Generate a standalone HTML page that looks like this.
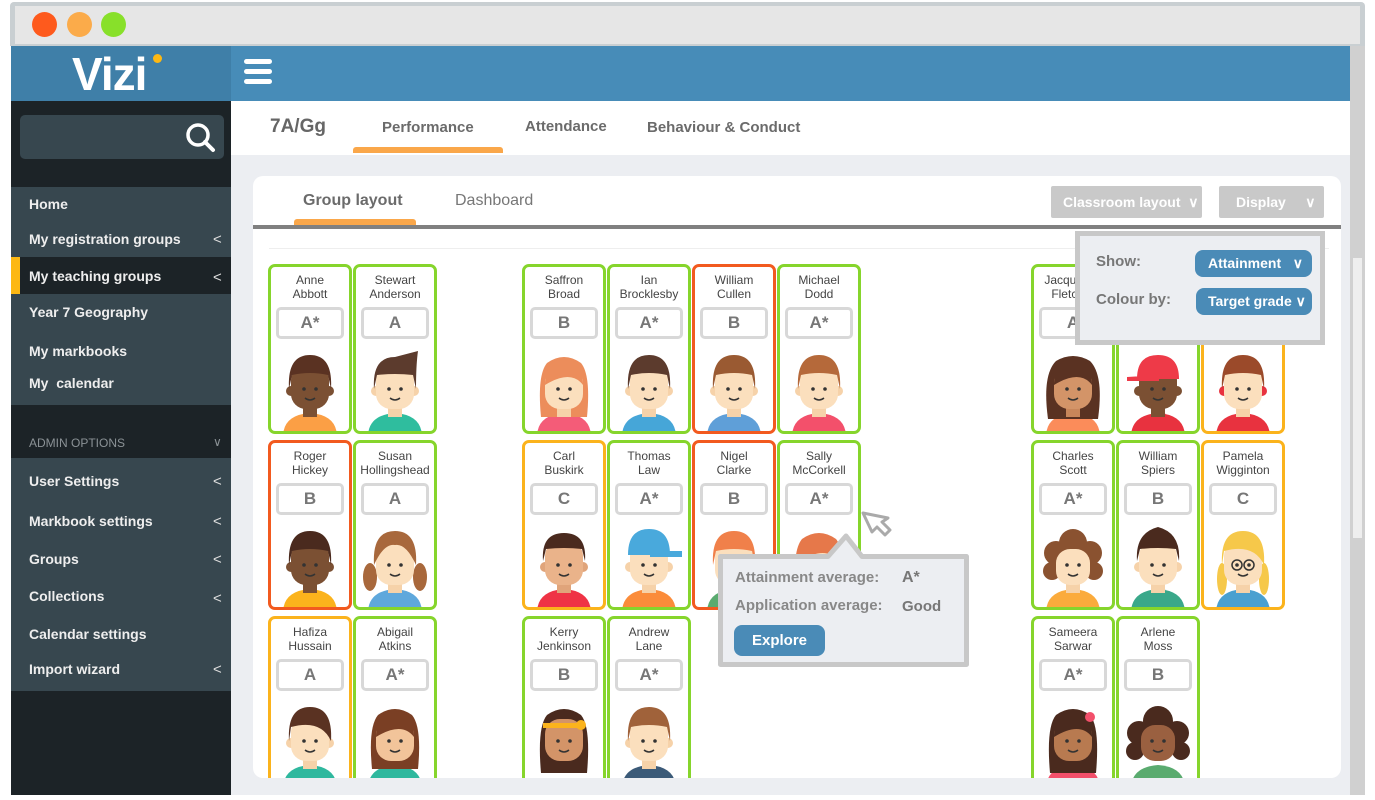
<!DOCTYPE html>
<html><head><meta charset="utf-8"><style>
*{margin:0;padding:0;box-sizing:border-box}
body{width:1375px;height:800px;overflow:hidden;background:#fff;font-family:"Liberation Sans",sans-serif;position:relative}
.a{position:absolute}
.frame{left:10px;top:2px;width:1355px;height:44px;background:#c9cfd2;border-radius:4px 4px 0 0}
.frame .in{left:5px;top:4px;width:1345px;height:38px;background:#e6e6e6}
.dot{width:25px;height:25px;border-radius:50%;top:10px}
.side{left:11px;top:101px;width:220px;height:694px;background:#1c2327;color:#eee;font-weight:bold;font-size:14px}
.mi{position:absolute;left:18px}
.chev{position:absolute;left:202px;font-size:15px;color:#ddd;font-weight:normal}
.card{position:absolute;width:84px;height:170px;border:3px solid #86d52c;border-radius:7px;background:#fff;overflow:hidden}
.card .n{position:absolute;top:6px;left:0;width:78px;text-align:center;font-size:12px;line-height:14px;color:#444}
.card .g{position:absolute;top:40px;left:5px;width:68px;height:32px;border:3px solid #d8d8d8;border-radius:5px;text-align:center;font-weight:bold;font-size:17px;line-height:26px;color:#777}
.card svg{position:absolute;top:78px;left:0}
.R{border-color:#f25a1f}.Y{border-color:#fbb31c}
.btn{background:#4a8bb7;color:#fff;font-weight:bold;border-radius:8px}
</style></head><body>
<div class="a frame"><div class="a in"></div>
<div class="a dot" style="left:22px;background:#fe5a1d"></div>
<div class="a dot" style="left:57px;background:#fbab4a"></div>
<div class="a dot" style="left:91px;background:#88e02a"></div></div>
<!-- header -->
<div class="a" style="left:11px;top:46px;width:220px;height:55px;background:#3f7fa8"></div>
<div class="a" style="left:231px;top:46px;width:1119px;height:55px;background:#478cb8"></div>
<div class="a" style="left:72px;top:46px;color:#fff;font-weight:bold;font-size:46px;line-height:56px;letter-spacing:-1px">Vizi</div>
<div class="a" style="left:153px;top:54px;width:9px;height:9px;border-radius:50%;background:#fdb813"></div>
<div class="a" style="left:244px;top:59px;width:28px;height:5px;background:#fff;border-radius:3px"></div>
<div class="a" style="left:244px;top:69px;width:28px;height:5px;background:#fff;border-radius:3px"></div>
<div class="a" style="left:244px;top:79px;width:28px;height:5px;background:#fff;border-radius:3px"></div>
<!-- sidebar -->
<div class="a side">
<div class="a" style="left:9px;top:14px;width:204px;height:44px;background:#37474f;border-radius:5px"></div>
<svg class="a" style="left:172px;top:19px" width="34" height="34" viewBox="0 0 34 34"><circle cx="15" cy="15" r="10" fill="none" stroke="#fff" stroke-width="3.5"/><path d="M22 22 L30 30" stroke="#fff" stroke-width="4" stroke-linecap="round"/></svg>
<div class="a" style="left:0;top:86px;width:220px;height:218px;background:#37474f"></div>
<div class="a" style="left:0;top:156px;width:220px;height:37px;background:#1c2327"></div>
<div class="a" style="left:0;top:156px;width:9px;height:37px;background:#fdb813"></div>
<div class="mi" style="top:95px">Home</div>
<div class="mi" style="top:130px">My registration groups</div><div class="chev" style="top:130px">&lt;</div>
<div class="mi" style="top:167px">My teaching groups</div><div class="chev" style="top:168px">&lt;</div>
<div class="mi" style="top:203px">Year 7 Geography</div>
<div class="mi" style="top:242px">My markbooks</div>
<div class="mi" style="top:274px">My &nbsp;calendar</div>
<div class="mi" style="top:335px;font-weight:normal;font-size:12px;color:#8b9296">ADMIN OPTIONS</div><div class="chev" style="top:334px;color:#8b9296;font-size:12px">&#8744;</div>
<div class="a" style="left:0;top:357px;width:220px;height:233px;background:#37474f"></div>
<div class="mi" style="top:372px">User Settings</div><div class="chev" style="top:372px">&lt;</div>
<div class="mi" style="top:412px">Markbook settings</div><div class="chev" style="top:412px">&lt;</div>
<div class="mi" style="top:450px">Groups</div><div class="chev" style="top:450px">&lt;</div>
<div class="mi" style="top:487px">Collections</div><div class="chev" style="top:489px">&lt;</div>
<div class="mi" style="top:525px">Calendar settings</div>
<div class="mi" style="top:560px">Import wizard</div><div class="chev" style="top:560px">&lt;</div>
</div>
<!-- main -->
<div class="a" style="left:231px;top:101px;width:1119px;height:694px;background:#eceef2"></div>
<div class="a" style="left:231px;top:101px;width:1119px;height:54px;background:#fff"></div>
<div class="a" style="left:270px;top:116px;font-size:19px;font-weight:bold;color:#666">7A/Gg</div>
<div class="a" style="left:382px;top:119px;font-size:15px;font-weight:bold;color:#6b6b6b">Performance</div>
<div class="a" style="left:353px;top:147px;width:150px;height:6px;background:#faa74a;border-radius:3px 3px 0 0"></div>
<div class="a" style="left:525px;top:118px;font-size:15px;font-weight:bold;color:#6b6b6b">Attendance</div>
<div class="a" style="left:647px;top:119px;font-size:15px;font-weight:bold;color:#6b6b6b">Behaviour &amp; Conduct</div>
<div class="a" style="left:1350px;top:46px;width:15px;height:749px;background:#d0d0d0"></div>
<div class="a" style="left:1353px;top:258px;width:9px;height:280px;background:#eee"></div>
<div class="a" style="left:253px;top:176px;width:1088px;height:602px;background:#fff;border-radius:10px;overflow:hidden">
<div class="a" style="left:50px;top:16px;font-size:16px;font-weight:bold;color:#6b6b6b">Group layout</div>
<div class="a" style="left:202px;top:16px;font-size:16px;color:#777">Dashboard</div>
<div class="a" style="left:41px;top:43px;width:122px;height:6px;background:#faa74a;border-radius:3px 3px 0 0"></div>
<div class="a" style="left:0;top:49px;width:1088px;height:4px;background:#808080"></div>
<div class="a" style="left:16px;top:72px;width:1060px;height:1px;background:#eee"></div>
<div class="a" style="left:798px;top:10px;width:151px;height:32px;background:#c9c9c9;border-radius:2px;color:#fff;font-weight:bold;font-size:14px;line-height:32px;padding-left:12px">Classroom layout &nbsp;&#8744;</div>
<div class="a" style="left:966px;top:10px;width:105px;height:32px;background:#c9c9c9;border-radius:2px;color:#fff;font-weight:bold;font-size:14px;line-height:32px;padding-left:17px">Display &nbsp;&nbsp;&nbsp;&nbsp;&#8744;</div>
</div>

<svg width="0" height="0" style="position:absolute"><defs>
<symbol id="sm" viewBox="0 0 78 90"><circle cx="33" cy="44" r="1.8" fill="#333"/><circle cx="45" cy="44" r="1.8" fill="#333"/><path d="M34 53 Q39 57 44 53" stroke="#333" stroke-width="1.5" fill="none"/></symbol>
</defs></svg>

<!-- cards -->
<div id="cards">
<!-- template: head skin, hair, shirt -->
<div class="card" style="left:268px;top:264px"><div class="n">Anne<br>Abbott</div><div class="g">A*</div>
<svg width="78" height="90" viewBox="0 0 78 90"><path d="M12 92 Q12 70 39 68 Q66 70 66 92Z" fill="#fb9f45"/><rect x="32" y="58" width="14" height="14" fill="#7b5033"/><circle cx="20" cy="46" r="5" fill="#7b5033"/><circle cx="58" cy="46" r="5" fill="#7b5033"/><rect x="20" y="20" width="38" height="44" rx="15" fill="#7b5033"/><path d="M18 44 Q16 10 39 10 Q62 10 60 44 L57 30 Q39 26 21 30Z" fill="#5a3222"/><use href="#sm" width="78" height="90"/></svg></div>
<div class="card" style="left:353px;top:264px"><div class="n">Stewart<br>Anderson</div><div class="g">A</div>
<svg width="78" height="90" viewBox="0 0 78 90"><path d="M12 92 Q12 70 39 68 Q66 70 66 92Z" fill="#2fbd9e"/><rect x="32" y="58" width="14" height="14" fill="#f6d2a9"/><circle cx="20" cy="46" r="5" fill="#f6d2a9"/><circle cx="58" cy="46" r="5" fill="#f6d2a9"/><rect x="20" y="20" width="38" height="44" rx="15" fill="#fbdfbd"/><path d="M18 44 Q16 12 39 12 L62 6 Q60 20 60 44 L57 30 Q39 28 21 30Z" fill="#5c3b2d"/><use href="#sm" width="78" height="90"/></svg></div>

<div class="card" style="left:522px;top:264px"><div class="n">Saffron<br>Broad</div><div class="g">B</div>
<svg width="78" height="90" viewBox="0 0 78 90"><path d="M12 92 Q12 70 39 68 Q66 70 66 92Z" fill="#f45c78"/><path d="M16 72 Q12 30 22 18 Q39 6 56 18 Q66 30 62 72Z" fill="#ec8d5b"/><rect x="32" y="58" width="14" height="14" fill="#f6d2a9"/><rect x="20" y="22" width="38" height="42" rx="15" fill="#fbdfbd"/><path d="M20 40 Q20 14 39 14 Q58 14 58 40 Q46 24 20 40Z" fill="#ec8d5b"/><use href="#sm" width="78" height="90"/></svg></div>
<div class="card" style="left:607px;top:264px"><div class="n">Ian<br>Brocklesby</div><div class="g">A*</div>
<svg width="78" height="90" viewBox="0 0 78 90"><path d="M12 92 Q12 70 39 68 Q66 70 66 92Z" fill="#46a6d8"/><rect x="32" y="58" width="14" height="14" fill="#f6d2a9"/><circle cx="20" cy="46" r="5" fill="#f6d2a9"/><circle cx="58" cy="46" r="5" fill="#f6d2a9"/><rect x="20" y="20" width="38" height="44" rx="15" fill="#fbdfbd"/><path d="M18 44 Q16 10 39 10 Q62 10 60 44 L57 30 Q39 26 21 30Z" fill="#5c3b2d"/><use href="#sm" width="78" height="90"/></svg></div>
<div class="card R" style="left:692px;top:264px"><div class="n">William<br>Cullen</div><div class="g">B</div>
<svg width="78" height="90" viewBox="0 0 78 90"><path d="M12 92 Q12 70 39 68 Q66 70 66 92Z" fill="#5f9fd8"/><rect x="32" y="58" width="14" height="14" fill="#f6d2a9"/><circle cx="20" cy="46" r="5" fill="#f6d2a9"/><circle cx="58" cy="46" r="5" fill="#f6d2a9"/><rect x="20" y="20" width="38" height="44" rx="15" fill="#fbdfbd"/><path d="M18 44 Q16 10 39 10 Q62 10 60 44 L57 30 Q39 26 21 30Z" fill="#9a5a32"/><use href="#sm" width="78" height="90"/></svg></div>
<div class="card" style="left:777px;top:264px"><div class="n">Michael<br>Dodd</div><div class="g">A*</div>
<svg width="78" height="90" viewBox="0 0 78 90"><path d="M12 92 Q12 70 39 68 Q66 70 66 92Z" fill="#f3506b"/><rect x="32" y="58" width="14" height="14" fill="#f6d2a9"/><circle cx="20" cy="46" r="5" fill="#f6d2a9"/><circle cx="58" cy="46" r="5" fill="#f6d2a9"/><rect x="20" y="20" width="38" height="44" rx="15" fill="#fbdfbd"/><path d="M18 44 Q16 10 39 10 Q62 10 60 44 L57 30 Q39 26 21 30Z" fill="#b5693a"/><use href="#sm" width="78" height="90"/></svg></div>

<div class="card" style="left:1031px;top:264px"><div class="n">Jacqueline<br>Fletcher</div><div class="g">A</div>
<svg width="78" height="90" viewBox="0 0 78 90"><path d="M12 92 Q12 70 39 68 Q66 70 66 92Z" fill="#fb8c5a"/><path d="M14 74 Q8 30 22 16 Q39 6 56 16 Q70 30 64 74Z" fill="#5a3222"/><rect x="32" y="58" width="14" height="14" fill="#c8865a"/><rect x="20" y="22" width="38" height="42" rx="15" fill="#d39468"/><path d="M20 40 Q20 14 39 14 Q58 14 58 40 Q46 24 20 40Z" fill="#5a3222"/><use href="#sm" width="78" height="90"/></svg></div>
<div class="card" style="left:1116px;top:264px"><div class="n">&nbsp;<br>&nbsp;</div><div class="g">B</div>
<svg width="78" height="90" viewBox="0 0 78 90"><path d="M12 92 Q12 70 39 68 Q66 70 66 92Z" fill="#e8323f"/><rect x="32" y="58" width="14" height="14" fill="#7b5033"/><circle cx="20" cy="46" r="5" fill="#7b5033"/><circle cx="58" cy="46" r="5" fill="#7b5033"/><rect x="20" y="20" width="38" height="44" rx="15" fill="#7b5033"/><path d="M18 34 Q18 10 39 10 Q60 10 60 34Z M8 32 L40 30 L40 36 L8 36Z" fill="#ee3a48"/><use href="#sm" width="78" height="90"/></svg></div>
<div class="card Y" style="left:1201px;top:264px"><div class="n">&nbsp;<br>&nbsp;</div><div class="g">B</div>
<svg width="78" height="90" viewBox="0 0 78 90"><path d="M12 92 Q12 70 39 68 Q66 70 66 92Z" fill="#e8323f"/><rect x="32" y="58" width="14" height="14" fill="#f6d2a9"/><circle cx="20" cy="46" r="5" fill="#e8323f"/><circle cx="58" cy="46" r="5" fill="#e8323f"/><rect x="20" y="20" width="38" height="44" rx="15" fill="#fbdfbd"/><path d="M18 44 Q16 10 39 10 Q62 10 60 44 L57 30 Q39 26 21 30Z" fill="#9b4a2a"/><use href="#sm" width="78" height="90"/></svg></div>

<!-- row 2 -->
<div class="card R" style="left:268px;top:440px"><div class="n">Roger<br>Hickey</div><div class="g">B</div>
<svg width="78" height="90" viewBox="0 0 78 90"><path d="M12 92 Q12 70 39 68 Q66 70 66 92Z" fill="#fbb31c"/><rect x="32" y="58" width="14" height="14" fill="#7b5033"/><circle cx="20" cy="46" r="5" fill="#7b5033"/><circle cx="58" cy="46" r="5" fill="#7b5033"/><rect x="20" y="20" width="38" height="44" rx="15" fill="#7b5033"/><path d="M18 44 Q16 10 39 10 Q62 10 60 44 L57 30 Q39 26 21 30Z" fill="#4a2a1e"/><use href="#sm" width="78" height="90"/></svg></div>
<div class="card" style="left:353px;top:440px"><div class="n">Susan<br>Hollingshead</div><div class="g">A</div>
<svg width="78" height="90" viewBox="0 0 78 90"><path d="M12 92 Q12 70 39 68 Q66 70 66 92Z" fill="#5fa8dc"/><ellipse cx="14" cy="56" rx="7" ry="14" fill="#a8683c"/><ellipse cx="64" cy="56" rx="7" ry="14" fill="#a8683c"/><rect x="32" y="58" width="14" height="14" fill="#f6d2a9"/><rect x="20" y="20" width="38" height="44" rx="15" fill="#fbdfbd"/><path d="M18 44 Q16 10 39 10 Q62 10 60 44 Q50 22 39 24 Q28 22 18 44Z" fill="#a8683c"/><use href="#sm" width="78" height="90"/></svg></div>
<div class="card Y" style="left:522px;top:440px"><div class="n">Carl<br>Buskirk</div><div class="g">C</div>
<svg width="78" height="90" viewBox="0 0 78 90"><path d="M12 92 Q12 70 39 68 Q66 70 66 92Z" fill="#ef3345"/><rect x="32" y="58" width="14" height="14" fill="#e0a47a"/><circle cx="20" cy="46" r="5" fill="#e0a47a"/><circle cx="58" cy="46" r="5" fill="#e0a47a"/><rect x="20" y="20" width="38" height="44" rx="15" fill="#eab38a"/><path d="M18 40 Q16 12 39 12 Q62 12 60 40 L57 28 Q39 26 21 28Z" fill="#4a2a1e"/><use href="#sm" width="78" height="90"/></svg></div>
<div class="card" style="left:607px;top:440px"><div class="n">Thomas<br>Law</div><div class="g">A*</div>
<svg width="78" height="90" viewBox="0 0 78 90"><path d="M12 92 Q12 70 39 68 Q66 70 66 92Z" fill="#fb8c3a"/><rect x="32" y="58" width="14" height="14" fill="#f6d2a9"/><circle cx="20" cy="46" r="5" fill="#f6d2a9"/><circle cx="58" cy="46" r="5" fill="#f6d2a9"/><rect x="20" y="20" width="38" height="44" rx="15" fill="#fbdfbd"/><path d="M18 34 Q18 8 39 8 Q60 8 60 34Z M40 30 L72 30 L72 36 L40 36Z" fill="#49a9dc"/><use href="#sm" width="78" height="90"/></svg></div>
<div class="card R" style="left:692px;top:440px"><div class="n">Nigel<br>Clarke</div><div class="g">B</div>
<svg width="78" height="90" viewBox="0 0 78 90"><path d="M12 92 Q12 70 39 68 Q66 70 66 92Z" fill="#5aab6f"/><rect x="32" y="58" width="14" height="14" fill="#f6d2a9"/><rect x="20" y="20" width="38" height="44" rx="15" fill="#fbdfbd"/><path d="M18 44 Q16 10 39 10 Q62 10 60 44 L57 30 Q39 26 21 30Z" fill="#f0804a"/><use href="#sm" width="78" height="90"/></svg></div>
<div class="card" style="left:777px;top:440px"><div class="n">Sally<br>McCorkell</div><div class="g">A*</div>
<svg width="78" height="90" viewBox="0 0 78 90"><path d="M12 92 Q12 70 39 68 Q66 70 66 92Z" fill="#f45c78"/><path d="M16 72 Q12 30 22 18 Q39 6 56 18 Q66 30 62 72Z" fill="#e6784a"/><rect x="20" y="22" width="38" height="42" rx="15" fill="#fbdfbd"/><path d="M20 40 Q20 14 39 14 Q58 14 58 40 Q46 24 20 40Z" fill="#e6784a"/></svg></div>
<div class="card" style="left:1031px;top:440px"><div class="n">Charles<br>Scott</div><div class="g">A*</div>
<svg width="78" height="90" viewBox="0 0 78 90"><path d="M12 92 Q12 70 39 68 Q66 70 66 92Z" fill="#fbab3c"/><circle cx="22" cy="32" r="12" fill="#8a5230"/><circle cx="56" cy="32" r="12" fill="#8a5230"/><circle cx="39" cy="22" r="14" fill="#8a5230"/><circle cx="18" cy="50" r="9" fill="#8a5230"/><circle cx="60" cy="50" r="9" fill="#8a5230"/><rect x="32" y="58" width="14" height="14" fill="#f6d2a9"/><rect x="22" y="28" width="34" height="36" rx="14" fill="#fbdfbd"/><use href="#sm" width="78" height="90"/></svg></div>
<div class="card" style="left:1116px;top:440px"><div class="n">William<br>Spiers</div><div class="g">B</div>
<svg width="78" height="90" viewBox="0 0 78 90"><path d="M12 92 Q12 70 39 68 Q66 70 66 92Z" fill="#3aa88a"/><rect x="32" y="58" width="14" height="14" fill="#f6d2a9"/><circle cx="20" cy="46" r="5" fill="#f6d2a9"/><circle cx="58" cy="46" r="5" fill="#f6d2a9"/><rect x="20" y="20" width="38" height="44" rx="15" fill="#fbdfbd"/><path d="M18 40 Q16 12 39 6 Q62 12 60 40 L57 28 Q39 26 21 28Z" fill="#4a2a1e"/><use href="#sm" width="78" height="90"/></svg></div>
<div class="card Y" style="left:1201px;top:440px"><div class="n">Pamela<br>Wigginton</div><div class="g">C</div>
<svg width="78" height="90" viewBox="0 0 78 90"><path d="M12 92 Q12 70 39 68 Q66 70 66 92Z" fill="#4aa0d0"/><ellipse cx="18" cy="58" rx="5" ry="16" fill="#f6c84a"/><ellipse cx="60" cy="58" rx="5" ry="16" fill="#f6c84a"/><rect x="32" y="58" width="14" height="14" fill="#f6d2a9"/><rect x="20" y="20" width="38" height="44" rx="15" fill="#fbdfbd"/><path d="M18 44 Q16 10 39 10 Q62 10 60 44 Q50 22 20 30Z" fill="#f6c84a"/><circle cx="33" cy="44" r="5" fill="none" stroke="#333" stroke-width="1.5"/><circle cx="45" cy="44" r="5" fill="none" stroke="#333" stroke-width="1.5"/><use href="#sm" width="78" height="90"/></svg></div>

<!-- row 3 -->
<div class="card Y" style="left:268px;top:616px"><div class="n">Hafiza<br>Hussain</div><div class="g">A</div>
<svg width="78" height="90" viewBox="0 0 78 90"><path d="M12 92 Q12 70 39 68 Q66 70 66 92Z" fill="#2fb89e"/><rect x="32" y="58" width="14" height="14" fill="#f6d2a9"/><circle cx="20" cy="46" r="5" fill="#f6d2a9"/><circle cx="58" cy="46" r="5" fill="#f6d2a9"/><rect x="20" y="20" width="38" height="44" rx="15" fill="#fbdfbd"/><path d="M18 44 Q16 10 39 10 Q62 10 60 44 Q50 22 20 30Z" fill="#5a3222"/><use href="#sm" width="78" height="90"/></svg></div>
<div class="card" style="left:353px;top:616px"><div class="n">Abigail<br>Atkins</div><div class="g">A*</div>
<svg width="78" height="90" viewBox="0 0 78 90"><path d="M12 92 Q12 70 39 68 Q66 70 66 92Z" fill="#2fb89e"/><path d="M16 72 Q12 30 22 18 Q39 6 56 18 Q66 30 62 72Z" fill="#7a3f24"/><rect x="20" y="22" width="38" height="42" rx="15" fill="#f2c49a"/><path d="M20 40 Q20 14 39 14 Q58 14 58 40 Q46 24 20 40Z" fill="#7a3f24"/><use href="#sm" width="78" height="90"/></svg></div>
<div class="card" style="left:522px;top:616px"><div class="n">Kerry<br>Jenkinson</div><div class="g">B</div>
<svg width="78" height="90" viewBox="0 0 78 90"><path d="M16 76 Q12 30 22 18 Q39 6 56 18 Q66 30 62 76Z" fill="#4a2a1e"/><rect x="20" y="22" width="38" height="42" rx="15" fill="#d39468"/><rect x="18" y="26" width="42" height="5" fill="#fbb31c"/><circle cx="56" cy="28" r="5" fill="#fbb31c"/><use href="#sm" width="78" height="90"/></svg></div>
<div class="card" style="left:607px;top:616px"><div class="n">Andrew<br>Lane</div><div class="g">A*</div>
<svg width="78" height="90" viewBox="0 0 78 90"><path d="M12 92 Q12 70 39 68 Q66 70 66 92Z" fill="#3b5a78"/><rect x="32" y="58" width="14" height="14" fill="#f6d2a9"/><circle cx="20" cy="46" r="5" fill="#f6d2a9"/><circle cx="58" cy="46" r="5" fill="#f6d2a9"/><rect x="20" y="20" width="38" height="44" rx="15" fill="#fbdfbd"/><path d="M18 44 Q16 10 39 10 Q62 10 60 44 L57 30 Q39 26 21 30Z" fill="#a0623a"/><use href="#sm" width="78" height="90"/></svg></div>
<div class="card" style="left:1031px;top:616px"><div class="n">Sameera<br>Sarwar</div><div class="g">A*</div>
<svg width="78" height="90" viewBox="0 0 78 90"><path d="M12 92 Q12 70 39 68 Q66 70 66 92Z" fill="#f3506b"/><path d="M16 76 Q12 30 22 18 Q39 6 56 18 Q66 30 62 76Z" fill="#4a2a1e"/><rect x="20" y="22" width="38" height="42" rx="15" fill="#b87a50"/><path d="M20 40 Q20 14 39 14 Q58 14 58 40 Q46 24 20 40Z" fill="#4a2a1e"/><circle cx="56" cy="20" r="5" fill="#f3506b"/><use href="#sm" width="78" height="90"/></svg></div>
<div class="card" style="left:1116px;top:616px"><div class="n">Arlene<br>Moss</div><div class="g">B</div>
<svg width="78" height="90" viewBox="0 0 78 90"><path d="M12 92 Q12 70 39 68 Q66 70 66 92Z" fill="#5aab6f"/><circle cx="20" cy="36" r="12" fill="#4a2a1e"/><circle cx="58" cy="36" r="12" fill="#4a2a1e"/><circle cx="39" cy="24" r="15" fill="#4a2a1e"/><circle cx="16" cy="54" r="9" fill="#4a2a1e"/><circle cx="62" cy="54" r="9" fill="#4a2a1e"/><rect x="22" y="28" width="34" height="36" rx="14" fill="#9a6040"/><use href="#sm" width="78" height="90"/></svg></div>
</div>
<!-- cover card bottom -->
<div class="a" style="left:253px;top:778px;width:1097px;height:17px;background:#eceef2"></div>
<div class="a" style="left:231px;top:795px;width:1134px;height:5px;background:#fff"></div>

<!-- show popover -->
<div class="a" style="left:1075px;top:231px;width:250px;height:114px;background:#eceef2;border:5px solid #c8c8c8"></div>
<div class="a" style="left:1096px;top:253px;font-size:15px;font-weight:bold;color:#777">Show:</div>
<div class="a" style="left:1096px;top:291px;font-size:15px;font-weight:bold;color:#777">Colour by:</div>
<div class="a btn" style="left:1195px;top:250px;width:117px;height:27px;font-size:14px;line-height:27px;padding-left:13px">Attainment &nbsp;&nbsp;&#8744;</div>
<div class="a btn" style="left:1196px;top:288px;width:116px;height:27px;font-size:14px;line-height:27px;padding-left:12px">Target grade &#8744;</div>

<!-- tooltip -->
<svg class="a" style="left:716px;top:528px" width="256" height="142" viewBox="0 0 256 142"><path d="M4.5 28.5 L112 28.5 L130 8 L146 28.5 L250.5 28.5 L250.5 136.5 L4.5 136.5Z" fill="#eceef2" stroke="#c8c8c8" stroke-width="5" stroke-linejoin="round"/></svg>
<svg class="a" style="left:860px;top:510px" width="34" height="28" viewBox="0 0 34 28"><path d="M3 3 L28 8 L22 12 L30 20 L25 25 L17 17 L12 22Z" fill="#fff" stroke="#aaa" stroke-width="3" stroke-linejoin="round"/></svg>
<div class="a" style="left:735px;top:569px;font-size:15px;font-weight:bold;color:#888">Attainment average:</div>
<div class="a" style="left:902px;top:569px;font-size:16px;font-weight:bold;color:#777">A*</div>
<div class="a" style="left:735px;top:597px;font-size:15px;font-weight:bold;color:#888">Application average:</div>
<div class="a" style="left:902px;top:598px;font-size:15px;font-weight:bold;color:#777">Good</div>
<div class="a btn" style="left:734px;top:625px;width:91px;height:31px;font-size:15px;line-height:31px;text-align:center">Explore</div>
</body></html>
